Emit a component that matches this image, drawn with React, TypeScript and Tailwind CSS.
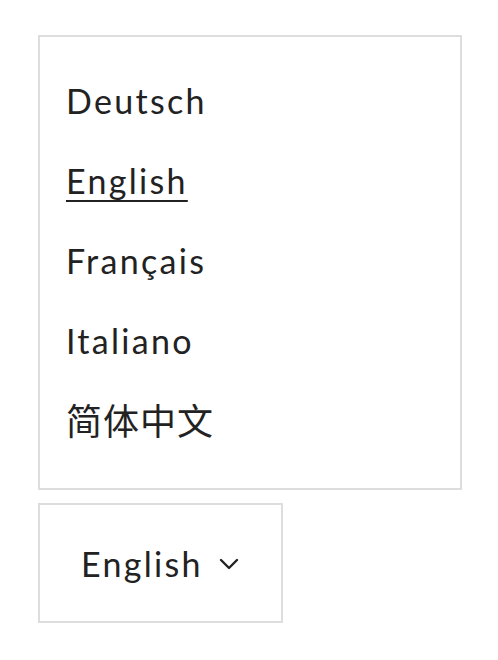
const languages = ["Deutsch", "English", "Français", "Italiano", "简体中文"];

export default function App() {
  const current = "English";

  return (
    <div
      className="min-h-screen bg-white pl-[38px] pt-[35px] text-[#222]"
      style={{ fontFamily: '"Lato", "Noto Sans CJK SC", sans-serif' }}
    >
      <ul className="w-[424px] border-2 border-[#ddd] pl-[26px] pt-[24px] pb-[27px]">
        {languages.map((lang) => (
          <li
            key={lang}
            className={
              lang === "简体中文"
                ? "text-[36px] leading-[80px] tracking-[1px]"
                : "text-[34px] leading-[80px] tracking-[2.3px]"
            }
          >
            <a
              href="#"
              className={
                lang === current
                  ? "underline decoration-2 underline-offset-[6px]"
                  : ""
              }
            >
              {lang}
            </a>
          </li>
        ))}
      </ul>

      <button className="mt-[13px] flex h-[120px] w-[245px] items-center gap-[16px] border-2 border-[#ddd] pl-[41px] text-[34px] tracking-[2.3px]">
        {current}
        <svg width="20" height="12" viewBox="0 0 20 12" fill="none" className="mt-[2px]">
          <path d="M2 2 L10 10 L18 2" stroke="#222" strokeWidth="2.4" strokeLinecap="round" strokeLinejoin="round" />
        </svg>
      </button>
    </div>
  );
}
